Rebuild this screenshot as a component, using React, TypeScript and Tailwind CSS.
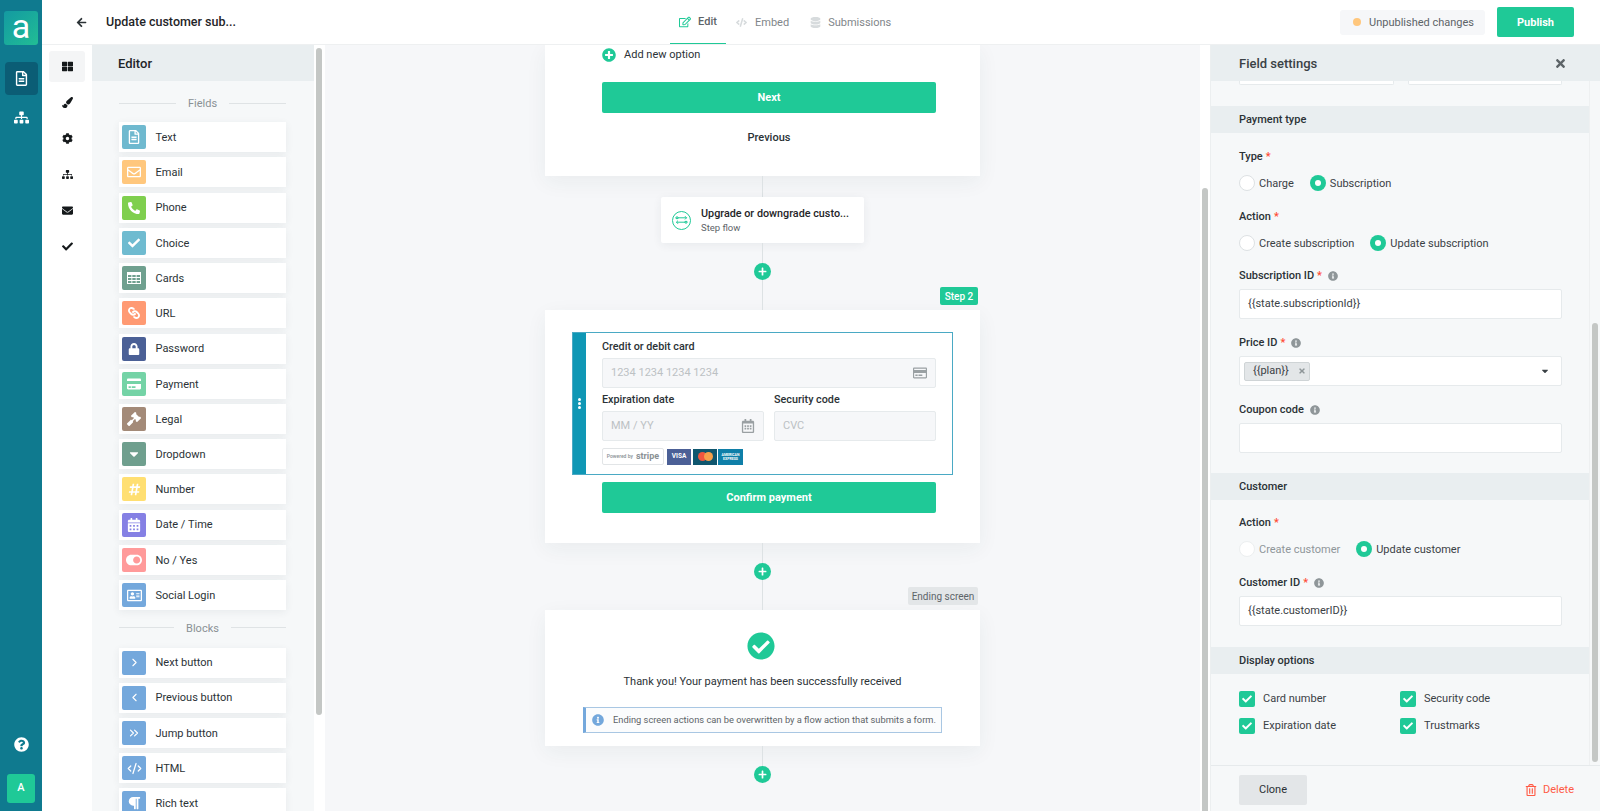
import type { ReactNode } from 'react'
import {
  FaArrowLeft, FaRegAddressCard, FaCalendarAlt, FaCaretDown, FaCheck,
  FaCheckCircle, FaCode, FaCog, FaCreditCard, FaDatabase, FaEnvelope, FaGavel, FaHashtag,
  FaInfoCircle, FaLink, FaLock, FaParagraph, FaPaintBrush, FaPhoneAlt, FaPlus, FaPlusCircle, FaQuestionCircle,
  FaRegCalendarAlt, FaRegCreditCard, FaRegEdit, FaRegEnvelope, FaRegFileAlt, FaRegTrashAlt, FaSitemap,
  FaThLarge, FaTimes, FaToggleOn,
} from 'react-icons/fa'
import { ChevronLeft, ChevronRight, ChevronsRight, CodeXml } from 'lucide-react'

const GridIcon = () => (
  <svg width="14" height="12" viewBox="0 0 14 12" fill="currentColor">
    <path d="M0 0h14v12H0zM1 3v2h3.4V3zm4.3 0v2h3.4V3zm4.3 0v2H13V3zM1 6v2h3.4V6zm4.3 0v2h3.4V6zm4.3 0v2H13V6zM1 9v2h3.4V9zm4.3 0v2h3.4V9zm4.3 0v2H13V9z" fillRule="evenodd" />
  </svg>
)

const fields = [
  { label: 'Text', color: 'bg-[#6fb9cf]', icon: <FaRegFileAlt /> },
  { label: 'Email', color: 'bg-[#ffc77d]', icon: <FaRegEnvelope /> },
  { label: 'Phone', color: 'bg-[#7fcf4e]', icon: <FaPhoneAlt className="text-[12px]" /> },
  { label: 'Choice', color: 'bg-[#6fbbd0]', icon: <FaCheck className="text-[12px]" /> },
  { label: 'Cards', color: 'bg-[#6fa08f]', icon: <GridIcon /> },
  { label: 'URL', color: 'bg-[#ff9a73]', icon: <FaLink className="rotate-90 text-[12px]" /> },
  { label: 'Password', color: 'bg-[#4b6096]', icon: <FaLock className="text-[12px]" /> },
  { label: 'Payment', color: 'bg-[#74d3a6]', icon: <FaCreditCard /> },
  { label: 'Legal', color: 'bg-[#a38a78]', icon: <FaGavel /> },
  { label: 'Dropdown', color: 'bg-[#6f9f8e]', icon: <FaCaretDown /> },
  { label: 'Number', color: 'bg-[#ffdf72]', icon: <FaHashtag className="text-[13px]" /> },
  { label: 'Date / Time', color: 'bg-[#8580e4]', icon: <FaCalendarAlt /> },
  { label: 'No / Yes', color: 'bg-[#ff9a9a]', icon: <FaToggleOn className="text-[16px]" /> },
  { label: 'Social Login', color: 'bg-[#74a8dc]', icon: <FaRegAddressCard className="text-[15px]" /> },
]

const blocks = [
  { label: 'Next button', color: 'bg-[#74a8dc]', icon: <ChevronRight size={13} /> },
  { label: 'Previous button', color: 'bg-[#74a8dc]', icon: <ChevronLeft size={13} /> },
  { label: 'Jump button', color: 'bg-[#74a8dc]', icon: <ChevronsRight size={14} /> },
  { label: 'HTML', color: 'bg-[#74a8dc]', icon: <CodeXml size={15} /> },
  { label: 'Rich text', color: 'bg-[#74a8dc]', icon: <FaParagraph /> },
]

function PaletteItem({ item }: { item: { label: string; color: string; icon: ReactNode } }) {
  return (
    <div className="flex h-[30px] shrink-0 items-center bg-white pl-[3px] shadow-[0_2px_8px_rgba(40,60,70,0.07)]">
      <div className={`flex h-6 w-6 items-center justify-center rounded-[2px] text-[14px] text-white ${item.color}`}>
        {item.icon}
      </div>
      <span className="ml-[9.5px] pt-[2px] text-[11px] text-[#2b3236]">{item.label}</span>
    </div>
  )
}

function GroupTitle({ children }: { children: string }) {
  return (
    <div className="flex h-[19px] items-center gap-3 text-[11px] text-[#8a9195]">
      <div className="h-px flex-1 bg-[#dfe3e5]" />
      <span className="pt-[2px]">{children}</span>
      <div className="h-px flex-1 bg-[#dfe3e5]" />
    </div>
  )
}

function Connector({ h }: { h: string }) {
  return <div className={`w-px bg-[#dde2e4] ${h}`} />
}

function AddButton() {
  return (
    <div className="flex h-[17px] w-[17px] shrink-0 items-center justify-center rounded-full bg-[#1fc997] text-[9px] text-white">
      <FaPlus />
    </div>
  )
}

function Radio({ label, on, off }: { label: string; on?: boolean; off?: boolean }) {
  return (
    <div className="flex h-4 items-center gap-[4px]">
      {on ? (
        <div className="flex h-4 w-4 items-center justify-center rounded-full bg-[#1fc997]">
          <div className="h-[6px] w-[6px] rounded-full bg-white" />
        </div>
      ) : (
        <div className={`h-4 w-4 rounded-full border bg-white ${off ? 'border-[#eceff0]' : 'border-[#dde1e3]'}`} />
      )}
      <span className={`pt-[2px] text-[11px] ${off ? 'text-[#8f9699]' : 'text-[#3a4145]'}`}>{label}</span>
    </div>
  )
}

function FieldLabel({ text, required, info }: { text: string; required?: boolean; info?: boolean }) {
  return (
    <div className="flex h-[16px] items-center text-[11px] font-medium text-[#2b3236]">
      {text}
      {required && <span className="ml-[3px] text-[#ff4a33]">*</span>}
      {info && <FaInfoCircle className="ml-[6px] text-[10px] text-[#8f9699]" />}
    </div>
  )
}

function TextInput({ children }: { children?: ReactNode }) {
  return (
    <div className="mt-[5px] flex h-[30px] items-center rounded-[2px] border border-[#e6eaec] bg-white px-2 text-[11px] text-[#3a4145]">
      {children}
    </div>
  )
}

function SectionHead({ children, className }: { children: string; className: string }) {
  return (
    <div className={`flex h-[27px] items-center bg-[#e9eef0] pt-[2px] pl-[28px] text-[11px] font-medium text-[#2b3236] ${className}`}>
      {children}
    </div>
  )
}

function Check({ label }: { label: string }) {
  return (
    <div className="flex h-[16px] w-[161px] items-center gap-[8px]">
      <div className="flex h-4 w-4 items-center justify-center rounded-[2px] bg-[#1fc997] text-[10px] text-white">
        <FaCheck />
      </div>
      <span className="text-[11px] text-[#3a4145]">{label}</span>
    </div>
  )
}

function CardField({ placeholder, icon, className }: { placeholder: string; icon?: ReactNode; className?: string }) {
  return (
    <div className={`flex h-[30px] items-center justify-between rounded-[2px] border border-[#e6eaec] bg-[#f6f7f9] px-2 text-[11px] text-[#bcc1c4] ${className ?? ''}`}>
      <span>{placeholder}</span>
      <span className="text-[14px] text-[#9aa0a3]">{icon}</span>
    </div>
  )
}

export default function App() {
  return (
    <div className="flex h-[811px] w-[1600px] overflow-hidden bg-white font-['Roboto',sans-serif]">
      {/* main rail */}
      <div className="flex w-[42px] shrink-0 flex-col items-center bg-[#0f7a8f] pt-[11px] pb-[8px] text-white">
        <div className="flex h-[34px] w-[34px] items-center justify-center rounded-[3px] bg-gradient-to-br from-[#149aa1] to-[#22bd94] pb-[5px] text-[34px] leading-none">
          a
        </div>
        <div className="mt-[17px] flex h-[33px] w-[33px] items-center justify-center rounded-[4px] bg-[#0b5d75] text-[15px]">
          <FaRegFileAlt />
        </div>
        <div className="mt-[14px] flex h-[16px] items-center text-[15px]">
          <FaSitemap />
        </div>
        <FaQuestionCircle className="mt-auto text-[15px]" />
        <div className="mt-[22px] flex h-[29px] w-[28px] items-center justify-center rounded-[3px] bg-[#1fc997] text-[11px] font-medium">
          A
        </div>
      </div>

      <div className="flex min-w-0 flex-1 flex-col">
        {/* top bar */}
        <header className="relative z-10 flex h-[45px] shrink-0 items-center border-b border-[#eef0f1] bg-white">
          <FaArrowLeft className="ml-[34px] text-[11px] text-[#2b3236]" />
          <span className="ml-[19px] w-[140px] text-[12.5px] font-medium text-[#1f2528]">Update customer sub...</span>
          <nav className="ml-[424px] flex h-full text-[11px] text-[#7f868a]">
            <div className="flex h-full w-[56px] items-center justify-center gap-[7px] border-b border-[#1fc997] font-medium text-[#5d6468]">
              <FaRegEdit className="text-[12px] text-[#1fc997]" />
              <span className="pt-[2px]">Edit</span>
            </div>
            <div className="ml-[10px] flex items-center gap-[8px]">
              <FaCode className="text-[11px] text-[#d7dbdd]" />
              <span className="pt-[2px]">Embed</span>
            </div>
            <div className="ml-[21px] flex items-center gap-[7px]">
              <FaDatabase className="text-[11px] text-[#d7dbdd]" />
              <span className="pt-[2px]">Submissions</span>
            </div>
          </nav>
          <div className="ml-auto flex h-[25px] w-[145px] items-center rounded-[3px] bg-[#f6f7f9] pl-[13px] text-[11px] text-[#5d6468]">
            <span className="mr-[8px] h-2 w-2 rounded-full bg-[#ffc77d]" />
            <span className="pt-[2px]">Unpublished changes</span>
          </div>
          <div className="mr-[26px] ml-[12px] flex h-[30px] w-[77px] items-center justify-center rounded-[2px] bg-[#1fc997] pt-[2px] text-[11px] font-bold text-white">
            Publish
          </div>
        </header>

        <div className="flex min-h-0 flex-1">
          {/* section rail */}
          <div className="flex w-[50px] shrink-0 flex-col items-center pt-[6px] text-[11px] text-[#15191b]">
            <div className="flex h-[31px] w-[36px] items-center justify-center rounded-[3px] bg-[#f4f5f6]"><FaThLarge /></div>
            <div className="mt-[5px] flex h-[31px] items-center"><FaPaintBrush /></div>
            <div className="mt-[5px] flex h-[31px] items-center"><FaCog /></div>
            <div className="mt-[5px] flex h-[31px] items-center"><FaSitemap /></div>
            <div className="mt-[5px] flex h-[31px] items-center"><FaEnvelope /></div>
            <div className="mt-[5px] flex h-[31px] items-center"><FaCheck /></div>
          </div>

          {/* editor palette */}
          <aside className="flex w-[222px] shrink-0 flex-col overflow-hidden bg-[#f6f8f9]">
            <div className="flex h-[36px] shrink-0 items-center bg-[#e9eef0] pt-[1px] pl-[26px] text-[13px] font-medium text-[#1f2528]">Editor</div>
            <div className="flex flex-col gap-[5.23px] pt-[13px] pr-[28px] pl-[27px]">
              <div className="mb-[4px]"><GroupTitle>Fields</GroupTitle></div>
              {fields.map(f => <PaletteItem key={f.label} item={f} />)}
              <div className="mt-[3px] mb-[5px]"><GroupTitle>Blocks</GroupTitle></div>
              {blocks.map(b => <PaletteItem key={b.label} item={b} />)}
            </div>
          </aside>
          <div className="w-[11px] shrink-0 bg-white pt-[3px] pl-[2px]">
            <div className="h-[667px] w-[6px] rounded-full bg-[#c4c7c5]" />
          </div>

          {/* flow canvas */}
          <main className="flex min-w-0 flex-1 flex-col items-center overflow-hidden bg-[#f6f7f9]">
            <section className="flex h-[131px] w-[435px] shrink-0 flex-col bg-white pr-[44px] pl-[57px] shadow-[0_6px_20px_rgba(40,60,70,0.06)]">
              <div className="flex h-[19px] items-center gap-[8px] text-[11px] text-[#2b3236]">
                <FaPlusCircle className="text-[14px] text-[#1fc997]" />
                <span className="pt-[2px]">Add new option</span>
              </div>
              <div className="mt-[18px] flex h-[31px] items-center justify-center rounded-[2px] bg-[#1fc997] pt-[2px] text-[11px] font-bold text-white">Next</div>
              <div className="mt-[17px] text-center text-[11px] font-medium text-[#2b3236]">Previous</div>
            </section>
            <Connector h="h-[21px]" />
            <div className="flex h-[46px] w-[203px] shrink-0 items-center rounded-[2px] bg-white pl-[11px] shadow-[0_2px_10px_rgba(40,60,70,0.07)]">
              <div className="flex h-[19px] w-[19px] items-center justify-center rounded-full border border-[#1fc997] text-[10px] text-[#1fc997]">
                <svg width="13" height="10" viewBox="0 0 13 10" fill="none" stroke="currentColor" strokeWidth="1">
                  <path d="M1 2h2v1.6H1zM3 2.8h8.5M10 1.2l1.6 1.6L10 4.4M10 6.4h2v1.6h-2zM10 7.2H1.5M3 5.6L1.4 7.2 3 8.8" />
                </svg>
              </div>
              <div className="ml-[10px] pt-[1px] leading-none">
                <div className="text-[10.8px] font-medium text-[#1f2528]">Upgrade or downgrade custo...</div>
                <div className="mt-[3px] text-[9.5px] text-[#5d6468]">Step flow</div>
              </div>
            </div>
            <Connector h="h-[20px]" />
            <AddButton />
            <div className="flex w-[435px] shrink-0 flex-col items-center">
              <div className="relative flex h-[30px] w-full justify-center">
                <Connector h="h-[30px]" />
                <div className="absolute top-[7px] right-[2px] flex h-[18px] w-[38px] items-center justify-center rounded-[2px] bg-[#1fc997] text-[10px] font-medium text-white">Step 2</div>
              </div>
            </div>
            <section className="h-[233px] w-[435px] shrink-0 bg-white pt-[22px] shadow-[0_6px_20px_rgba(40,60,70,0.06)]">
              <div className="mx-[27px] flex h-[143px] border border-[#4aa9c4]">
                <div className="flex w-[13px] shrink-0 flex-col items-center justify-center gap-[1px] bg-[#0f97b5]">
                  <span className="h-[3px] w-[3px] rounded-full bg-white" />
                  <span className="h-[3px] w-[3px] rounded-full bg-white" />
                  <span className="h-[3px] w-[3px] rounded-full bg-white" />
                </div>
                <div className="flex-1 pt-[6px] pr-[16px] pl-[16px]">
                  <div className="flex h-[16px] items-center text-[10.8px] font-medium text-[#2b3236]">Credit or debit card</div>
                  <CardField className="mt-[3px]" placeholder="1234 1234 1234 1234" icon={<FaRegCreditCard />} />
                  <div className="mt-[4px] grid grid-cols-[162px_162px] gap-x-[10px]">
                    <div>
                      <div className="flex h-[16px] items-center text-[10.8px] font-medium text-[#2b3236]">Expiration date</div>
                      <CardField className="mt-[3px]" placeholder="MM / YY" icon={<FaRegCalendarAlt />} />
                    </div>
                    <div>
                      <div className="flex h-[16px] items-center text-[10.8px] font-medium text-[#2b3236]">Security code</div>
                      <CardField className="mt-[3px]" placeholder="CVC" />
                    </div>
                  </div>
                  <div className="mt-[7px] flex items-center">
                    <div className="flex h-[17px] w-[62px] items-center justify-center gap-[3px] rounded-[2px] border border-[#e2e5e7] bg-white text-[#8a9195]">
                      <span className="text-[5px] font-medium">Powered by</span>
                      <span className="text-[9px] font-bold">stripe</span>
                    </div>
                    <div className="ml-[3px] flex h-[16px] w-[24px] items-center justify-center bg-[#4b6096] text-[6.5px] font-bold text-white">VISA</div>
                    <div className="ml-[2px] flex h-[16px] w-[24px] items-center justify-center bg-[#0f566e]">
                      <span className="h-[9px] w-[9px] rounded-full bg-[#f0563f]" />
                      <span className="-ml-[3px] h-[9px] w-[9px] rounded-full bg-[#f6a04a]" />
                    </div>
                    <div className="ml-[1px] flex h-[16px] w-[25px] flex-col items-center justify-center bg-[#0f7fa8] text-[3.5px] leading-[4px] font-bold text-white">
                      <span>AMERICAN</span>
                      <span>EXPRESS</span>
                    </div>
                  </div>
                </div>
              </div>
              <div className="mt-[7px] mr-[44px] ml-[57px] flex h-[31px] items-center justify-center rounded-[2px] bg-[#1fc997] pt-[2px] text-[11px] font-bold text-white">Confirm payment</div>
            </section>
            <Connector h="h-[20px]" />
            <AddButton />
            <div className="relative flex h-[30px] w-[435px] shrink-0 justify-center">
              <Connector h="h-[30px]" />
              <div className="absolute top-[7px] right-[2px] flex h-[18px] w-[70px] items-center justify-center rounded-[2px] bg-[#e3e6e8] text-[10px] text-[#5d6468]">Ending screen</div>
            </div>
            <section className="flex h-[136px] w-[435px] shrink-0 flex-col items-center bg-white pt-[22px] shadow-[0_6px_20px_rgba(40,60,70,0.06)]">
              <FaCheckCircle className="-ml-[3px] text-[28px] text-[#1fc997]" />
              <div className="mt-[14px] h-[16px] text-[11px] leading-[16px] text-[#2b3236]">Thank you! Your payment has been successfully received</div>
              <div className="mt-[17px] flex h-[26px] w-[359px] items-center border border-l-[3px] border-[#a9c7e3] border-l-[#74a8dc] bg-[#fbfcfd] pl-[6px] text-[9.3px] whitespace-nowrap text-[#5d6468]">
                <FaInfoCircle className="mr-[9px] text-[12px] text-[#74a8dc]" />
                Ending screen actions can be overwritten by a flow action that submits a form.
              </div>
            </section>
            <Connector h="h-[20px]" />
            <AddButton />
          </main>
          <div className="w-[10px] shrink-0 bg-white pt-[143px] pl-[2px]">
            <div className="h-[623px] w-[6px] rounded-t-full bg-[#c4c7c5]" />
          </div>

          {/* field settings */}
          <aside className="flex w-[390px] shrink-0 flex-col overflow-hidden border-l border-[#eceff0] bg-[#f6f8f9]">
            <div className="flex h-[36px] shrink-0 items-center justify-between bg-[#e9eef0] pt-[1px] pr-[33px] pl-[28px] text-[13px] font-medium text-[#3a4145]">
              Field settings
              <FaTimes className="text-[13px] text-[#5d6468]" />
            </div>
            <div className="flex min-h-0 flex-1">
              <div className="w-[379px] shrink-0 overflow-hidden border-r border-[#eef0f1]">
                <div className="flex gap-[14px] pr-[27px] pl-[28px]">
                  <div className="h-[4px] flex-1 rounded-b-[2px] border border-t-0 border-[#e6eaec] bg-white" />
                  <div className="h-[4px] flex-1 rounded-b-[2px] border border-t-0 border-[#e6eaec] bg-white" />
                </div>
                <SectionHead className="mt-[21px]">Payment type</SectionHead>
                <div className="pr-[27px] pl-[28px]">
                  <div className="mt-[16px]"><FieldLabel text="Type" required /></div>
                  <div className="mt-[10px] flex gap-[16px]">
                    <Radio label="Charge" />
                    <Radio label="Subscription" on />
                  </div>
                  <div className="mt-[18px]"><FieldLabel text="Action" required /></div>
                  <div className="mt-[10px] flex gap-[16px]">
                    <Radio label="Create subscription" />
                    <Radio label="Update subscription" on />
                  </div>
                  <div className="mt-[17px]"><FieldLabel text="Subscription ID" required info /></div>
                  <TextInput>{'{{state.subscriptionId}}'}</TextInput>
                  <div className="mt-[16px]"><FieldLabel text="Price ID" required info /></div>
                  <div className="mt-[5px] flex h-[30px] items-center justify-between rounded-[2px] border border-[#e6eaec] bg-white pr-[11px] pl-[4px]">
                    <div className="flex h-[19px] w-[66px] items-center gap-[9px] rounded-[2px] border border-[#cfd4d6] bg-[#e3e6e8] pl-[8px] text-[11px] text-[#3a4145]">
                      {'{{plan}}'}
                      <FaTimes className="text-[8px] text-[#8f9699]" />
                    </div>
                    <FaCaretDown className="text-[10px] text-[#3a4145]" />
                  </div>
                  <div className="mt-[16px]"><FieldLabel text="Coupon code" info /></div>
                  <TextInput />
                </div>
                <SectionHead className="mt-[20px]">Customer</SectionHead>
                <div className="pr-[27px] pl-[28px]">
                  <div className="mt-[15px]"><FieldLabel text="Action" required /></div>
                  <div className="mt-[10px] flex gap-[16px]">
                    <Radio label="Create customer" off />
                    <Radio label="Update customer" on />
                  </div>
                  <div className="mt-[18px]"><FieldLabel text="Customer ID" required info /></div>
                  <TextInput>{'{{state.customerID}}'}</TextInput>
                </div>
                <SectionHead className="mt-[21px]">Display options</SectionHead>
                <div className="flex flex-wrap gap-y-[11px] pt-[17px] pl-[28px]">
                  <Check label="Card number" />
                  <Check label="Security code" />
                  <Check label="Expiration date" />
                  <Check label="Trustmarks" />
                </div>
              </div>
              <div className="pt-[242px] pl-[2px]">
                <div className="h-[439px] w-[6px] rounded-full bg-[#c4c7c5]" />
              </div>
            </div>
            <div className="flex h-[46px] shrink-0 items-center justify-between border-t border-[#e6eaec] pt-[2px] pr-[26px] pl-[28px]">
              <div className="flex h-[30px] w-[68px] items-center justify-center rounded-[2px] bg-[#e3e6e8] pt-[2px] text-[11px] text-[#2b3236]">Clone</div>
              <div className="flex items-center gap-[6px] text-[11px] text-[#ff5a45]">
                <FaRegTrashAlt className="text-[12px]" />
                <span className="pt-[2px]">Delete</span>
              </div>
            </div>
          </aside>
        </div>
      </div>
    </div>
  )
}
